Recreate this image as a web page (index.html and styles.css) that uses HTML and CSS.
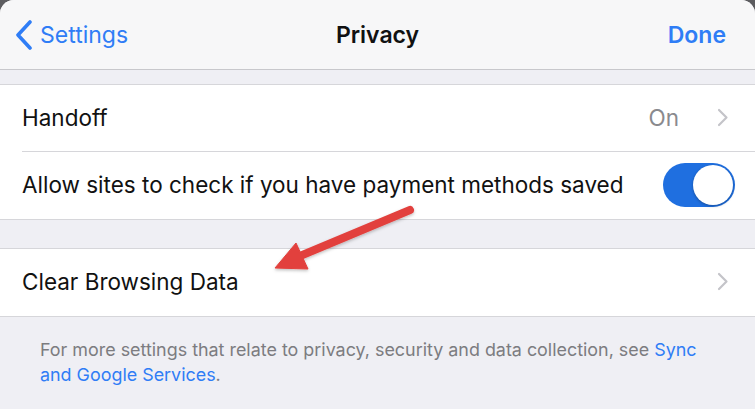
FILE: index.html
```html
<!DOCTYPE html>
<html>
<head>
<meta charset="utf-8">
<link rel="stylesheet" href="styles.css">
</head>
<body>
<div class="sheet">
  <header class="navbar">
    <div class="nav-left">
      <svg class="back-chev" width="18" height="30" viewBox="0 0 18 30"><path d="M15 2 L3 15 L15 28" fill="none" stroke="#2f7df6" stroke-width="3.6" stroke-linecap="round" stroke-linejoin="round"/></svg>
      <span class="nav-link">Settings</span>
    </div>
    <div class="nav-title">Privacy</div>
    <div class="nav-right"><span class="nav-done">Done</span></div>
  </header>
  <div class="gap gap-top"></div>
  <section class="group">
    <div class="row row-short">
      <span class="label">Handoff</span>
      <span class="value">On</span>
      <svg class="chev" width="12" height="19" viewBox="0 0 12 19"><path d="M2 2 L9.5 9.5 L2 17" fill="none" stroke="#c4c4c9" stroke-width="2.2" stroke-linecap="round" stroke-linejoin="round"/></svg>
    </div>
    <div class="row">
      <span class="label">Allow sites to check if you have payment methods saved</span>
      <span class="toggle"><span class="knob"></span></span>
    </div>
  </section>
  <div class="gap gap-mid"></div>
  <section class="group">
    <div class="row">
      <span class="label">Clear Browsing Data</span>
      <svg class="chev" width="12" height="19" viewBox="0 0 12 19"><path d="M2 2 L9.5 9.5 L2 17" fill="none" stroke="#c4c4c9" stroke-width="2.2" stroke-linecap="round" stroke-linejoin="round"/></svg>
    </div>
  </section>
  <p class="footer">For more settings that relate to privacy, security and data collection, see <span class="link">Sync and Google Services</span>.</p>
</div>
<svg class="arrow" width="755" height="409" viewBox="0 0 755 409">
  <defs>
    <filter id="sh" x="-20%" y="-20%" width="140%" height="140%">
      <feDropShadow dx="0" dy="1.5" stdDeviation="1.5" flood-color="#000" flood-opacity="0.25"/>
    </filter>
  </defs>
  <g filter="url(#sh)" fill="#e2413d" stroke="#e2413d">
    <line x1="410" y1="210" x2="300" y2="256" stroke-width="8" stroke-linecap="round"/>
    <polygon points="275,268 296,243 308,269" stroke-width="1" stroke-linejoin="round"/>
  </g>
</svg>
</body>
</html>
```
FILE: styles.css
```css
html, body {
  margin: 0;
  padding: 0;
}
body {
  width: 755px;
  height: 409px;
  background: #5d5d60;
  overflow: hidden;
  font-family: Inter, "Noto Sans", "Liberation Sans", sans-serif;
  position: relative;
}
.sheet {
  width: 755px;
  height: 409px;
  background: #efeff4;
  border-radius: 14px 14px 0 0;
  overflow: hidden;
}
.navbar {
  height: 69px;
  background: #f7f7f8;
  border-bottom: 1px solid #c8c8cc;
  display: grid;
  grid-template-columns: 1fr auto 1fr;
  align-items: center;
}
.nav-left {
  display: flex;
  align-items: center;
  padding-left: 15px;
  gap: 7px;
}
.back-chev { display: block; }
.nav-link {
  color: #2f7df6;
  font-size: 23px;
}
.nav-title {
  font-size: 23px;
  font-weight: 600;
  color: #111;
}
.nav-right {
  display: flex;
  justify-content: flex-end;
  padding-right: 29px;
}
.nav-done {
  color: #2f7df6;
  font-size: 23px;
  font-weight: 600;
}
.gap-top { height: 14px; border-bottom: 1px solid #d6d6da; }
.gap-mid { height: 28px; border-bottom: 1px solid #d6d6da; }
.group {
  background: #fff;
  border-bottom: 1px solid #d6d6da;
}
.row {
  height: 67px;
  box-sizing: border-box;
  display: flex;
  align-items: center;
  padding: 0 20px 2px 22px;
  position: relative;
  color: #111;
  font-size: 22.5px;
}
.row-short { height: 66px; }
.row + .row::before {
  content: "";
  position: absolute;
  left: 22px;
  right: 0;
  top: -1px;
  border-top: 1px solid #d6d6da;
}
.row + .row { margin-top: 1px; }
.label { flex: 1; }
.value {
  color: #8a8a8e;
  margin-right: 38px;
}
.chev { display: block; margin-right: 6px; }
.toggle {
  width: 72px;
  height: 44px;
  border-radius: 22px;
  background: #1f6fe0;
  position: relative;
}
.knob {
  position: absolute;
  right: 2px;
  top: 2px;
  width: 40px;
  height: 40px;
  border-radius: 50%;
  background: #fff;
  box-shadow: 0 1px 3px rgba(0,0,0,0.3);
}
.footer {
  margin: 20px 30px 0 40px;
  font-size: 17.9px;
  line-height: 25px;
  color: #7c7c80;
}
.link { color: #2f7df6; }
.arrow {
  position: absolute;
  left: 0;
  top: 0;
  pointer-events: none;
}
```
